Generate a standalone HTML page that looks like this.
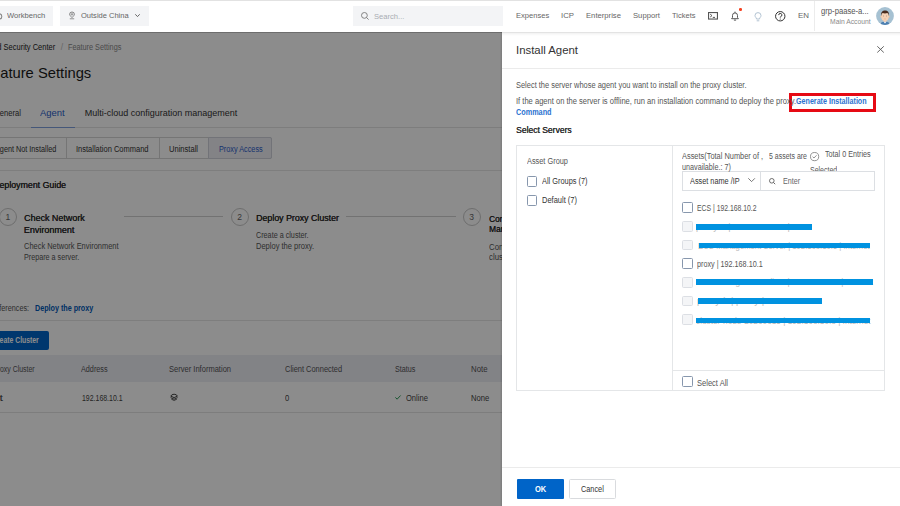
<!DOCTYPE html>
<html><head><meta charset="utf-8">
<style>
*{margin:0;padding:0;box-sizing:border-box}
html,body{width:900px;height:506px;overflow:hidden;background:#fff;font-family:"Liberation Sans",sans-serif;color:#333}
.a{position:absolute;white-space:nowrap;line-height:1}
.r{position:absolute}
#hdr{position:absolute;left:0;top:0;width:900px;height:32px;background:#fff}
#page{position:absolute;left:0;top:0;width:502px;height:506px;overflow:hidden}
#ov{position:absolute;left:0;top:32px;width:502px;height:474px;background:rgba(0,0,0,0.45)}
#drawer{position:absolute;left:0;top:0;width:900px;height:506px}
.cb{position:absolute;width:10.5px;height:10.5px;border:1px solid #8797ad;border-radius:1.5px;background:#fff}
.cbd{border-color:#dcdfe4;background:#f4f5f7}
.bar{position:absolute;height:5.8px;background:#0092e0}
svg{position:absolute;overflow:visible}
</style></head><body>
<div id="page">
  <div class="r" style="left:0;top:32px;width:502px;height:474px;background:#fff"></div>
  <!-- tabs border -->
  <div class="r" style="left:0;top:127px;width:502px;height:1px;background:#e3e3e3"></div>
  <div class="r" style="left:31px;top:126.5px;width:43.7px;height:1.6px;background:#7f9edd"></div>
  <!-- segmented -->
  <div class="r" style="left:-10px;top:137.2px;width:281.8px;height:22.2px;border:1px solid #d5d5d5;border-radius:0 2px 2px 0;background:#fff"></div>
  <div class="r" style="left:207.8px;top:137.2px;width:64px;height:22.2px;border:1px solid #cfd2da;border-radius:0 2px 2px 0;background:#eeeef5"></div>
  <div class="r" style="left:66.4px;top:137.2px;width:1px;height:22.2px;background:#d5d5d5"></div>
  <div class="r" style="left:159.3px;top:137.2px;width:1px;height:22.2px;background:#d5d5d5"></div>
  <div class="r" style="left:0;top:170.2px;width:502px;height:1px;background:#e6e6e6"></div>
  <!-- steps -->
  <div class="r" style="left:-1px;top:208px;width:18px;height:18px;border:1px solid #c8c8c8;border-radius:50%"></div>
  <div class="r" style="left:124px;top:216.3px;width:99px;height:1px;background:#cfcfcf"></div>
  <div class="r" style="left:230.5px;top:208px;width:18px;height:18px;border:1px solid #c8c8c8;border-radius:50%"></div>
  <div class="r" style="left:346px;top:216.3px;width:110px;height:1px;background:#cfcfcf"></div>
  <div class="r" style="left:462.7px;top:208px;width:18px;height:18px;border:1px solid #c8c8c8;border-radius:50%"></div>
  <div class="r" style="left:0;top:320px;width:502px;height:1px;background:#e6e6e6"></div>
  <!-- create cluster btn -->
  <div class="r" style="left:-10px;top:330.7px;width:59px;height:19.6px;background:#0064c8;border-radius:2px"></div>
  <!-- table -->
  <div class="r" style="left:0;top:355px;width:502px;height:26.7px;background:#edeef5"></div>
  <div class="r" style="left:0;top:411.8px;width:502px;height:1px;background:#e3e3e3"></div>
  <svg style="left:169.9px;top:392.7px" width="8.2" height="7.8" viewBox="0 0 8.2 7.8"><path d="M0.8 3.2 A3.4 2.6 0 0 1 7.4 3.2 L4.1 4.6 Z" fill="none" stroke="#444" stroke-width="1"/><path d="M0.6 4.6 L4.1 6.2 L7.6 4.6 M1.4 6.2 L4.1 7.4 L6.8 6.2" fill="none" stroke="#444" stroke-width="0.9"/></svg>
  <svg style="left:395px;top:395.1px" width="6" height="4.8" viewBox="0 0 6 4.8"><path d="M0.4 2.4 L2.1 4.2 L5.6 0.5" fill="none" stroke="#2a9a55" stroke-width="1"/></svg>
<div class="a" style="left:-18.26px;top:43px;font-size:8.5px;font-weight:normal;color:#222;transform:scaleX(0.8794);transform-origin:0 0;">Cloud Security Center</div>
<div class="a" style="left:60.82px;top:43px;font-size:8.5px;font-weight:normal;color:#bbb;">/</div>
<div class="a" style="left:67.64px;top:43px;font-size:8.5px;font-weight:normal;color:#888;transform:scaleX(0.8547);transform-origin:0 0;">Feature Settings</div>
<div class="a" style="left:-17.32px;top:66px;font-size:14.5px;font-weight:normal;color:#1a1a1a;transform:scaleX(1.0171);transform-origin:0 0;">Feature Settings</div>
<div class="a" style="left:-5.93px;top:109px;font-size:9px;font-weight:normal;color:#333;transform:scaleX(0.8391);transform-origin:0 0;">General</div>
<div class="a" style="left:40.39px;top:109px;font-size:9px;font-weight:normal;color:#2a5cc8;transform:scaleX(1.0466);transform-origin:0 0;">Agent</div>
<div class="a" style="left:84.70px;top:109px;font-size:9px;font-weight:normal;color:#333;">Multi-cloud configuration management</div>
<div class="a" style="left:-5.40px;top:145px;font-size:8.5px;font-weight:normal;color:#333;transform:scaleX(0.8542);transform-origin:0 0;">Agent Not Installed</div>
<div class="a" style="left:76.44px;top:145px;font-size:8.5px;font-weight:normal;color:#333;transform:scaleX(0.8822);transform-origin:0 0;">Installation Command</div>
<div class="a" style="left:169.23px;top:145px;font-size:8.5px;font-weight:normal;color:#333;transform:scaleX(0.8904);transform-origin:0 0;">Uninstall</div>
<div class="a" style="left:218.54px;top:145px;font-size:8.5px;font-weight:normal;color:#2a5cc8;transform:scaleX(0.8566);transform-origin:0 0;">Proxy Access</div>
<div class="a" style="left:-6.55px;top:181px;font-size:9px;font-weight:normal;color:#2a2a2a;transform:scaleX(0.9785);transform-origin:0 0;text-shadow:0.3px 0 0 #2a2a2a;">Deployment Guide</div>
<div class="a" style="left:7.90px;top:213px;font-size:8.5px;font-weight:normal;color:#666;transform:translateX(-50%);">1</div>
<div class="a" style="left:23.70px;top:214px;font-size:9px;font-weight:normal;color:#2a2a2a;transform:scaleX(0.9929);transform-origin:0 0;text-shadow:0.3px 0 0 #2a2a2a;">Check Network</div>
<div class="a" style="left:23.70px;top:226px;font-size:9px;font-weight:normal;color:#2a2a2a;text-shadow:0.3px 0 0 #2a2a2a;">Environment</div>
<div class="a" style="left:23.74px;top:242px;font-size:8.5px;font-weight:normal;color:#555;transform:scaleX(0.8775);transform-origin:0 0;">Check Network Environment</div>
<div class="a" style="left:23.75px;top:253px;font-size:8.5px;font-weight:normal;color:#555;transform:scaleX(0.8467);transform-origin:0 0;">Prepare a server.</div>
<div class="a" style="left:239.60px;top:213px;font-size:8.5px;font-weight:normal;color:#666;transform:translateX(-50%);">2</div>
<div class="a" style="left:256.11px;top:214px;font-size:9px;font-weight:normal;color:#2a2a2a;transform:scaleX(0.9794);transform-origin:0 0;text-shadow:0.3px 0 0 #2a2a2a;">Deploy Proxy Cluster</div>
<div class="a" style="left:256.15px;top:231px;font-size:8.5px;font-weight:normal;color:#555;transform:scaleX(0.8484);transform-origin:0 0;">Create a cluster.</div>
<div class="a" style="left:256.13px;top:242px;font-size:8.5px;font-weight:normal;color:#555;transform:scaleX(0.8858);transform-origin:0 0;">Deploy the proxy.</div>
<div class="a" style="left:471.60px;top:213px;font-size:8.5px;font-weight:normal;color:#666;transform:translateX(-50%);">3</div>
<div class="a" style="left:488.52px;top:215px;font-size:9px;font-weight:normal;color:#2a2a2a;transform:scaleX(0.9200);transform-origin:0 0;text-shadow:0.3px 0 0 #2a2a2a;">Connect Client</div>
<div class="a" style="left:488.52px;top:225px;font-size:9px;font-weight:normal;color:#2a2a2a;transform:scaleX(0.9200);transform-origin:0 0;text-shadow:0.3px 0 0 #2a2a2a;">Management</div>
<div class="a" style="left:488.52px;top:243px;font-size:8.5px;font-weight:normal;color:#555;transform:scaleX(0.9200);transform-origin:0 0;">Connect clients to the</div>
<div class="a" style="left:488.52px;top:253px;font-size:8.5px;font-weight:normal;color:#555;transform:scaleX(0.9200);transform-origin:0 0;">cluster.</div>
<div class="a" style="left:-9.53px;top:304px;font-size:8.5px;font-weight:normal;color:#555;transform:scaleX(0.8525);transform-origin:0 0;">References:</div>
<div class="a" style="left:35.25px;top:304px;font-size:8.5px;font-weight:bold;color:#0058b8;transform:scaleX(0.8440);transform-origin:0 0;">Deploy the proxy</div>
<div class="a" style="left:-7.84px;top:336px;font-size:8.5px;font-weight:bold;color:#fff;transform:scaleX(0.8050);transform-origin:0 0;">Create Cluster</div>
<div class="a" style="left:-7.38px;top:365px;font-size:8.5px;font-weight:normal;color:#555;transform:scaleX(0.8159);transform-origin:0 0;">Proxy Cluster</div>
<div class="a" style="left:81.34px;top:365px;font-size:8.5px;font-weight:normal;color:#555;transform:scaleX(0.8533);transform-origin:0 0;">Address</div>
<div class="a" style="left:168.63px;top:365px;font-size:8.5px;font-weight:normal;color:#555;transform:scaleX(0.8872);transform-origin:0 0;">Server Information</div>
<div class="a" style="left:285.34px;top:365px;font-size:8.5px;font-weight:normal;color:#555;transform:scaleX(0.8759);transform-origin:0 0;">Client Connected</div>
<div class="a" style="left:394.95px;top:365px;font-size:8.5px;font-weight:normal;color:#555;transform:scaleX(0.8465);transform-origin:0 0;">Status</div>
<div class="a" style="left:470.72px;top:365px;font-size:8.5px;font-weight:normal;color:#555;transform:scaleX(0.9212);transform-origin:0 0;">Note</div>
<div class="a" style="left:-17.33px;top:394px;font-size:8.5px;font-weight:normal;color:#444;transform:scaleX(1.4648);transform-origin:0 0;">test</div>
<div class="a" style="left:81.75px;top:394px;font-size:8.5px;font-weight:normal;color:#444;transform:scaleX(0.8177);transform-origin:0 0;">192.168.10.1</div>
<div class="a" style="left:285.33px;top:394px;font-size:8.5px;font-weight:normal;color:#444;transform:scaleX(0.8949);transform-origin:0 0;">0</div>
<div class="a" style="left:406.43px;top:394px;font-size:8.5px;font-weight:normal;color:#444;transform:scaleX(0.8883);transform-origin:0 0;">Online</div>
<div class="a" style="left:470.73px;top:394px;font-size:8.5px;font-weight:normal;color:#444;transform:scaleX(0.8972);transform-origin:0 0;">None</div>
</div>
<div id="ov"></div>
<div id="hdr">
  <div class="r" style="left:0;top:0;width:900px;height:1px;background:#e2e2e2"></div>
  <div class="r" style="left:0;top:32px;width:502px;height:1px;background:rgba(0,0,0,0.22)"></div>
  <div class="r" style="left:0;top:6.2px;width:53px;height:19.6px;background:#f3f4f6"></div>
  <div class="r" style="left:60.4px;top:6.2px;width:88.6px;height:19.6px;background:#f3f4f6"></div>
  <div class="r" style="left:353px;top:6px;width:150px;height:19.6px;background:#f3f4f6"></div>
  <svg style="left:-4px;top:12.5px" width="7" height="7" viewBox="0 0 7 7"><circle cx="3.2" cy="3.4" r="2.6" fill="none" stroke="#888" stroke-width="1.1"/></svg>
  <svg style="left:69.3px;top:11.6px" width="6" height="7.2" viewBox="0 0 6 7.2"><path d="M3 5.6 C1.2 3.8 0.6 3 0.6 2.4 A2.4 2.4 0 0 1 5.4 2.4 C5.4 3 4.8 3.8 3 5.6 Z" fill="none" stroke="#666" stroke-width="0.8"/><circle cx="3" cy="2.4" r="0.8" fill="none" stroke="#666" stroke-width="0.7"/><path d="M0.8 6.8 H5.2" stroke="#666" stroke-width="0.7"/></svg>
  <svg style="left:134.6px;top:14px" width="5" height="3" viewBox="0 0 5 3"><path d="M0.3 0.3 L2.5 2.6 L4.7 0.3" fill="none" stroke="#555" stroke-width="0.9"/></svg>
  <svg style="left:360.6px;top:12.4px" width="8" height="8" viewBox="0 0 8 8"><circle cx="3.4" cy="3.4" r="2.9" fill="none" stroke="#777" stroke-width="0.9"/><path d="M5.5 5.5 L7.6 7.6" stroke="#777" stroke-width="0.9"/></svg>
  <svg style="left:707.8px;top:12.2px" width="10" height="7.6" viewBox="0 0 10 7.6"><rect x="0.55" y="0.55" width="8.9" height="6.5" fill="none" stroke="#555" stroke-width="1.1"/><path d="M2.2 2.2 L4 3.6 L2.2 5 M4.8 5.4 H7" fill="none" stroke="#555" stroke-width="1"/></svg>
  <svg style="left:731px;top:11px" width="8" height="9.8" viewBox="0 0 8 9.8"><path d="M0.6 7.7 H7.4 L6.5 6.4 V4.4 A2.5 2.5 0 0 0 1.5 4.4 V6.4 Z M4 0.6 V1.9 M2.9 9.1 H5.1" fill="none" stroke="#555" stroke-width="1"/></svg>
  <div class="r" style="left:739px;top:8.1px;width:2.6px;height:2.6px;border-radius:50%;background:#f5401f"></div>
  <svg style="left:754px;top:11.5px" width="8" height="10" viewBox="0 0 8 10"><path d="M2.5 7 C2.5 5.6 1 5 1 3.6 A3 3 0 0 1 7 3.6 C7 5 5.5 5.6 5.5 7 Z M2.7 8.8 H5.3" fill="none" stroke="#a9bccd" stroke-width="0.9"/></svg>
  <svg style="left:774.7px;top:11px" width="10.5" height="10.5" viewBox="0 0 10.5 10.5"><circle cx="5.25" cy="5.25" r="4.7" fill="none" stroke="#333" stroke-width="1"/><path d="M3.7 4.1 A1.6 1.6 0 1 1 5.6 5.6 C5.25 5.8 5.25 6 5.25 6.6" fill="none" stroke="#333" stroke-width="0.95"/><circle cx="5.25" cy="8" r="0.6" fill="#333"/></svg>
  <div class="r" style="left:814px;top:1px;width:1px;height:30px;background:#ececec"></div>
  <svg style="left:876.2px;top:7.2px" width="18" height="18" viewBox="0 0 18 18"><defs><clipPath id="avc"><circle cx="9" cy="9" r="8.9"/></clipPath></defs><circle cx="9" cy="9" r="8.9" fill="#a6c1d2"/><g clip-path="url(#avc)"><path d="M4 18 C4.5 15.5 6.5 14.6 9 14.6 C11.5 14.6 13.5 15.5 14 18 Z" fill="#4d7fb0"/><path d="M7.4 14.2 L9 16.4 L10.6 14.2 Z" fill="#fff"/><rect x="7.6" y="12.2" width="2.8" height="2.4" fill="#e9b996"/><ellipse cx="5.2" cy="9.6" rx="0.8" ry="1.2" fill="#efc4a4"/><ellipse cx="12.8" cy="9.6" rx="0.8" ry="1.2" fill="#efc4a4"/><ellipse cx="9" cy="9.6" rx="3.7" ry="4.5" fill="#f6d2b6"/><path d="M5.1 9.2 C4.7 5 6.6 3.4 9.1 3.4 C11.6 3.4 13.4 5 12.9 9.2 C12.6 7.4 12.2 6.4 11.4 6 C10 6.6 8 6.6 6.6 6 C5.8 6.5 5.4 7.4 5.1 9.2 Z" fill="#4a2c1e"/><path d="M7.3 9 H8 M10 9 H10.7" stroke="#5a3a2a" stroke-width="0.5"/><path d="M8.3 11.9 Q9 12.3 9.7 11.9" fill="none" stroke="#c98a70" stroke-width="0.4"/></g></svg>
<div class="a" style="left:6.82px;top:12px;font-size:8px;font-weight:normal;color:#666;transform:scaleX(0.9489);transform-origin:0 0;">Workbench</div>
<div class="a" style="left:80.62px;top:12px;font-size:8px;font-weight:normal;color:#666;transform:scaleX(0.9401);transform-origin:0 0;">Outside China</div>
<div class="a" style="left:374.32px;top:13px;font-size:8px;font-weight:normal;color:#a9adb3;transform:scaleX(0.9486);transform-origin:0 0;">Search...</div>
<div class="a" style="left:515.92px;top:12px;font-size:8px;font-weight:normal;color:#666;transform:scaleX(0.9467);transform-origin:0 0;">Expenses</div>
<div class="a" style="left:561.31px;top:12px;font-size:8px;font-weight:normal;color:#666;transform:scaleX(0.9730);transform-origin:0 0;">ICP</div>
<div class="a" style="left:586.41px;top:12px;font-size:8px;font-weight:normal;color:#666;transform:scaleX(0.9591);transform-origin:0 0;">Enterprise</div>
<div class="a" style="left:633.01px;top:12px;font-size:8px;font-weight:normal;color:#666;transform:scaleX(0.9588);transform-origin:0 0;">Support</div>
<div class="a" style="left:671.92px;top:12px;font-size:8px;font-weight:normal;color:#666;transform:scaleX(0.9367);transform-origin:0 0;">Tickets</div>
<div class="a" style="left:797.50px;top:12px;font-size:8px;font-weight:normal;color:#666;transform:scaleX(0.9881);transform-origin:0 0;">EN</div>
<div class="a" style="left:820.73px;top:7px;font-size:8.5px;font-weight:normal;color:#555;transform:scaleX(0.9021);transform-origin:0 0;">grp-paase-a...</div>
<div class="a" style="left:830.41px;top:18px;font-size:7px;font-weight:normal;color:#8a8a8a;transform:scaleX(0.9655);transform-origin:0 0;">Main Account</div>
</div>
<div id="drawer">
  <div class="r" style="left:499.6px;top:32px;width:2.4px;height:474px;background:linear-gradient(90deg,rgba(0,0,0,0),rgba(0,0,0,0.12))"></div>
  <div class="r" style="left:502px;top:32px;width:398px;height:474px;background:#fff"></div>
  <div class="r" style="left:502px;top:32px;width:398px;height:1px;background:rgba(0,0,0,0.11)"></div><div class="r" style="left:502px;top:33px;width:398px;height:2.5px;background:linear-gradient(rgba(0,0,0,0.05),rgba(0,0,0,0))"></div>
  <div class="r" style="left:502px;top:68px;width:398px;height:1px;background:#ebebeb"></div>
  <svg style="left:876.9px;top:46.3px" width="7.1" height="6.8" viewBox="0 0 7.1 6.8"><path d="M0.3 0.3 L6.8 6.5 M6.8 0.3 L0.3 6.5" fill="none" stroke="#555" stroke-width="0.9"/></svg>
  <div class="r" style="left:789px;top:92.8px;width:87px;height:19.6px;border:3px solid #e60a14"></div>
  <!-- box -->
  <div class="r" style="left:516.3px;top:145.3px;width:369.2px;height:245.3px;border:1px solid #e4e6e8"></div>
  <div class="r" style="left:671.8px;top:145.3px;width:1px;height:245.3px;background:#e4e6e8"></div>
  <div class="cb" style="left:526.8px;top:176.3px"></div>
  <div class="cb" style="left:526.8px;top:195px"></div>
  <svg style="left:809.9px;top:151.5px" width="9.2" height="9.2" viewBox="0 0 9.2 9.2"><circle cx="4.6" cy="4.6" r="4.1" fill="none" stroke="#777" stroke-width="0.8"/><path d="M2.6 4.7 L4 6 L6.6 3.3" fill="none" stroke="#777" stroke-width="0.8"/></svg>
  <div class="r" style="left:682.2px;top:171.4px;width:193px;height:19.2px;border:1px solid #dcdfe3;background:#fff"></div>
  <div class="r" style="left:759.6px;top:171.4px;width:1px;height:19.2px;background:#dcdfe3"></div>
  <svg style="left:747.8px;top:178.3px" width="7.2" height="4" viewBox="0 0 7.2 4"><path d="M0.3 0.3 L3.6 3.6 L6.9 0.3" fill="none" stroke="#555" stroke-width="0.8"/></svg>
  <svg style="left:769px;top:178px" width="6.5" height="6.5" viewBox="0 0 6.5 6.5"><circle cx="2.8" cy="2.8" r="2.3" fill="none" stroke="#555" stroke-width="0.85"/><path d="M4.5 4.5 L6.2 6.2" stroke="#555" stroke-width="0.9"/></svg>
  <div class="a" style="left:696.19px;top:223px;font-size:8.5px;font-weight:normal;color:#b8b8b8;transform:scaleX(1.0485);transform-origin:0 0;">proxy-a | 192.168.10.4 | VPC</div>
<div class="a" style="left:698.23px;top:242px;font-size:8.5px;font-weight:normal;color:#b8b8b8;transform:scaleX(0.9046);transform-origin:0 0;">ECS-Management Server | 192.168.10.5 | Internet</div>
<div class="a" style="left:696.21px;top:278px;font-size:8.5px;font-weight:normal;color:#b8b8b8;transform:scaleX(0.9502);transform-origin:0 0;">ECS-Management Client | 192.168.10.6 | Internet</div>
<div class="a" style="left:697.47px;top:297px;font-size:8.5px;font-weight:normal;color:#b8b8b8;transform:scaleX(1.1069);transform-origin:0 0;">proxy-b | proxy | 192.168.10.7</div>
<div class="a" style="left:695.91px;top:317px;font-size:8.5px;font-weight:normal;color:#b8b8b8;transform:scaleX(0.9713);transform-origin:0 0;">cluster-node-20230315 | 192.168.10.8 | Internet</div>
  <div class="cb" style="left:682.1px;top:202.4px"></div>
  <div class="cb cbd" style="left:682.1px;top:221px"></div>
  <div class="bar" style="left:696px;top:223.8px;width:115.5px"></div>
  <div class="cb cbd" style="left:682.1px;top:239.7px"></div>
  <div class="bar" style="left:698.7px;top:242.5px;width:171.3px"></div>
  <div class="cb" style="left:682.1px;top:258.4px"></div>
  <div class="cb cbd" style="left:682.1px;top:277px"></div>
  <div class="bar" style="left:696.4px;top:278.8px;width:176.9px"></div>
  <div class="cb cbd" style="left:682.1px;top:295.7px"></div>
  <div class="bar" style="left:697.6px;top:298.4px;width:124.4px"></div>
  <div class="cb cbd" style="left:682.1px;top:314.3px"></div>
  <div class="bar" style="left:696px;top:317.6px;width:174.4px"></div>
  <div class="r" style="left:672px;top:370.4px;width:213px;height:1px;background:#e4e6e8"></div>
  <div class="cb" style="left:682.1px;top:376.2px"></div>
  <!-- footer -->
  <div class="r" style="left:502px;top:466.5px;width:398px;height:1px;background:#ebebeb"></div>
  <div class="r" style="left:516.7px;top:479px;width:47.2px;height:19.9px;background:#0064c8;border-radius:1px"></div>
  <div class="r" style="left:569px;top:479px;width:47.3px;height:19.9px;border:1px solid #d9dbde;border-radius:1.5px;background:#fff"></div>
<div class="a" style="left:516.39px;top:45px;font-size:11px;font-weight:normal;color:#333;transform:scaleX(1.0348);transform-origin:0 0;">Install Agent</div>
<div class="a" style="left:516.44px;top:81px;font-size:8.5px;font-weight:normal;color:#555;transform:scaleX(0.8775);transform-origin:0 0;">Select the server whose agent you want to install on the proxy cluster.</div>
<div class="a" style="left:516.43px;top:97px;font-size:8.5px;font-weight:normal;color:#555;transform:scaleX(0.8898);transform-origin:0 0;">If the agent on the server is offline, run an installation command to deploy the proxy.</div>
<div class="a" style="left:796.45px;top:97px;font-size:8.5px;font-weight:bold;color:#2a72d0;transform:scaleX(0.8396);transform-origin:0 0;">Generate Installation</div>
<div class="a" style="left:516.44px;top:108px;font-size:8.5px;font-weight:bold;color:#2a72d0;transform:scaleX(0.8544);transform-origin:0 0;">Command</div>
<div class="a" style="left:516.42px;top:126px;font-size:9px;font-weight:normal;color:#2a2a2a;transform:scaleX(0.9494);transform-origin:0 0;text-shadow:0.3px 0 0 #2a2a2a;">Select Servers</div>
<div class="a" style="left:526.54px;top:157px;font-size:8.5px;font-weight:normal;color:#555;transform:scaleX(0.8660);transform-origin:0 0;">Asset Group</div>
<div class="a" style="left:541.74px;top:177px;font-size:8.5px;font-weight:normal;color:#333;transform:scaleX(0.8681);transform-origin:0 0;">All Groups (7)</div>
<div class="a" style="left:541.74px;top:196px;font-size:8.5px;font-weight:normal;color:#333;transform:scaleX(0.8826);transform-origin:0 0;">Default (7)</div>
<div class="a" style="left:681.94px;top:152px;font-size:8.5px;font-weight:normal;color:#555;transform:scaleX(0.8717);transform-origin:0 0;">Assets(Total Number of ,</div>
<div class="a" style="left:681.95px;top:163px;font-size:8.5px;font-weight:normal;color:#555;transform:scaleX(0.8483);transform-origin:0 0;">unavailable.: 7)</div>
<div class="a" style="left:768.75px;top:152px;font-size:8.5px;font-weight:normal;color:#555;transform:scaleX(0.8203);transform-origin:0 0;">5 assets are</div>
<div class="a" style="left:824.75px;top:150px;font-size:8.5px;font-weight:normal;color:#555;transform:scaleX(0.8466);transform-origin:0 0;">Total 0 Entries</div>
<div class="a" style="left:809.65px;top:166px;font-size:8.5px;font-weight:normal;color:#555;transform:scaleX(0.8217);transform-origin:0 0;height:5.4px;overflow:hidden;">Selected</div>
<div class="a" style="left:690.04px;top:177px;font-size:8.5px;font-weight:normal;color:#333;transform:scaleX(0.8608);transform-origin:0 0;">Asset name /IP</div>
<div class="a" style="left:782.85px;top:177px;font-size:8.5px;font-weight:normal;color:#666;transform:scaleX(0.8414);transform-origin:0 0;">Enter</div>
<div class="a" style="left:696.86px;top:204px;font-size:8.5px;font-weight:normal;color:#555;transform:scaleX(0.8047);transform-origin:0 0;">ECS | 192.168.10.2</div>
<div class="a" style="left:696.75px;top:260px;font-size:8.5px;font-weight:normal;color:#555;transform:scaleX(0.8494);transform-origin:0 0;">proxy | 192.168.10.1</div>
<div class="a" style="left:696.73px;top:379px;font-size:8.5px;font-weight:normal;color:#555;transform:scaleX(0.8874);transform-origin:0 0;">Select All</div>
<div class="a" style="left:534.74px;top:485px;font-size:8.5px;font-weight:bold;color:#fff;transform:scaleX(0.8807);transform-origin:0 0;">OK</div>
<div class="a" style="left:581.44px;top:485px;font-size:8.5px;font-weight:normal;color:#333;transform:scaleX(0.8620);transform-origin:0 0;">Cancel</div>
</div>
</body></html>
